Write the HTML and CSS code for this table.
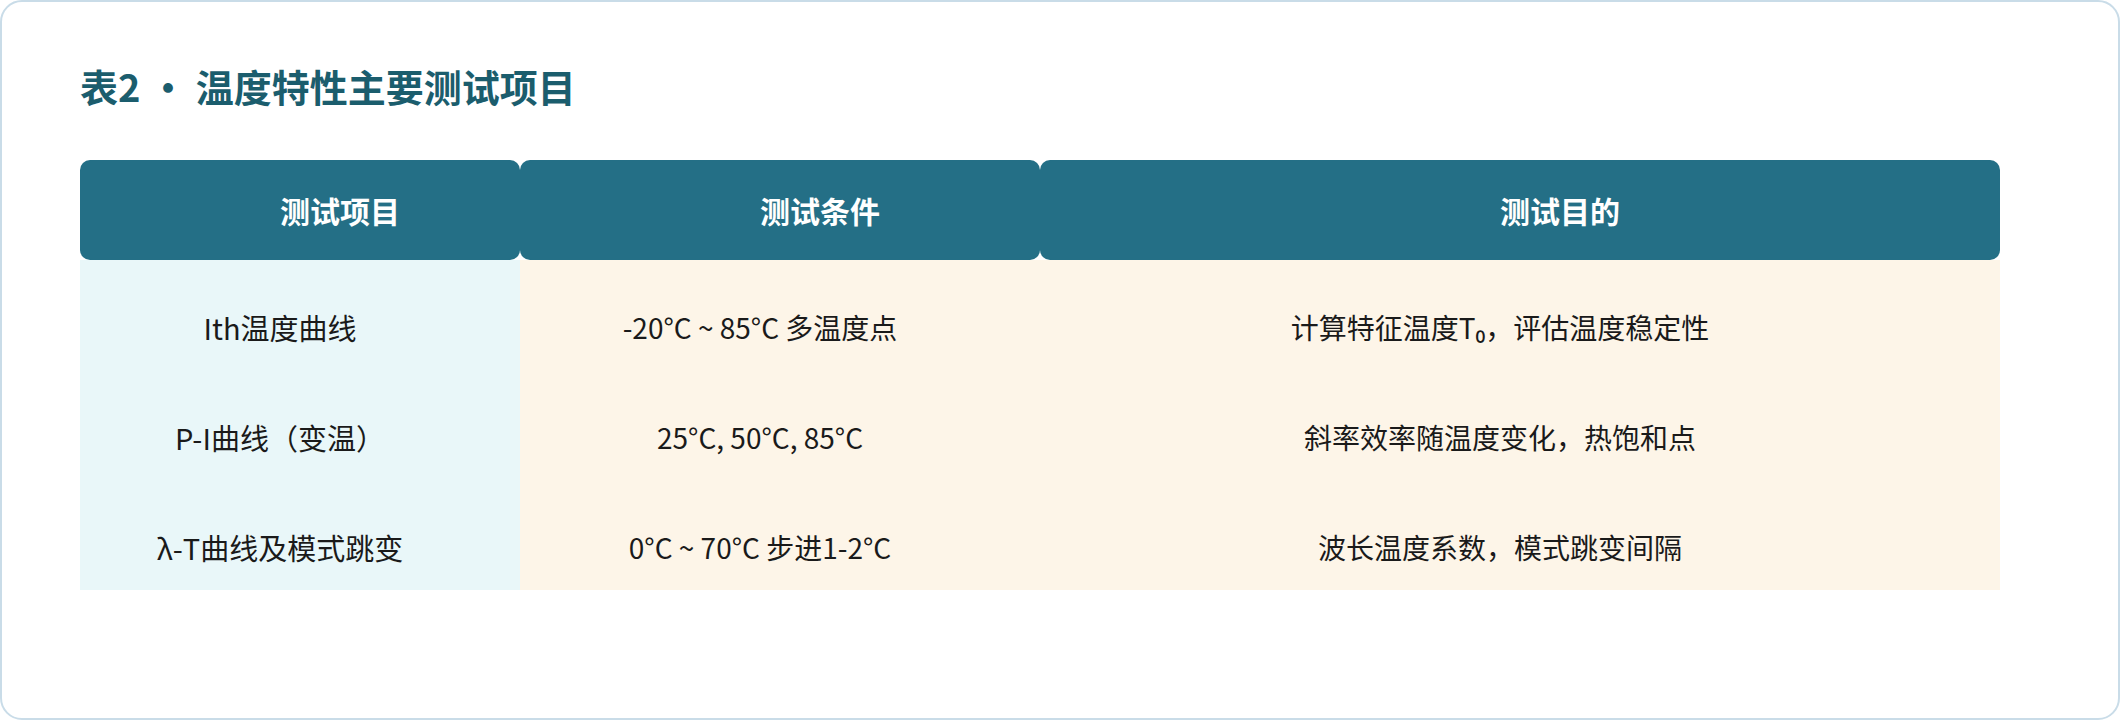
FILE: index.html
```html
<!DOCTYPE html>
<html lang="zh-CN">
<head>
<meta charset="utf-8">
<title>表2 · 温度特性主要测试项目</title>
<link rel="stylesheet" href="styles.css">
</head>
<body>
<div class="card">
  <h2 class="title">表2 · 温度特性主要测试项目</h2>
  <table class="spec">
    <colgroup>
      <col class="c1"><col class="c2"><col class="c3">
    </colgroup>
    <thead>
      <tr><th>测试项目</th><th>测试条件</th><th>测试目的</th></tr>
    </thead>
    <tbody>
      <tr><td class="item">Ith温度曲线</td><td>-20°C ~ 85°C 多温度点</td><td>计算特征温度T₀，评估温度稳定性</td></tr>
      <tr><td class="item">P-I曲线（变温）</td><td>25°C, 50°C, 85°C</td><td>斜率效率随温度变化，热饱和点</td></tr>
      <tr><td class="item">λ-T曲线及模式跳变</td><td>0°C ~ 70°C 步进1-2°C</td><td>波长温度系数，模式跳变间隔</td></tr>
    </tbody>
  </table>
</div>
</body>
</html>
```
FILE: styles.css
```css
html, body {
  margin: 0;
  padding: 0;
  background: #ffffff;
}
body {
  font-family: "Noto Sans CJK SC", "Noto Sans", sans-serif;
  color: #1a1a1a;
}
.card {
  box-sizing: border-box;
  width: 2120px;
  height: 720px;
  border: 2px solid #c9dce8;
  border-radius: 22px;
  padding: 56px 78px 0 78px;
  background: #ffffff;
}
.title {
  margin: 0 0 46px 0;
  font-size: 38px;
  line-height: 56px;
  font-weight: 700;
  color: #1b5d6d;
}
.spec {
  width: 1920px;
  table-layout: fixed;
  border-collapse: separate;
  border-spacing: 0;
}
.c1 { width: 440px; }
.c2 { width: 520px; }
.c3 { width: 960px; }
.spec th {
  height: 100px;
  padding: 0 0 0 80px;
  background: #246f86;
  color: #ffffff;
  font-size: 30px;
  font-weight: 700;
  text-align: center;
  border-radius: 10px;
}
.spec td {
  height: 86px;
  padding: 24px 40px 0 0;
  font-size: 28px;
  line-height: 86px;
  text-align: center;
  background: #fdf5e8;
  white-space: nowrap;
}
.spec td.item {
  background: #e9f7f9;
  font-size: 29px;
}
```
